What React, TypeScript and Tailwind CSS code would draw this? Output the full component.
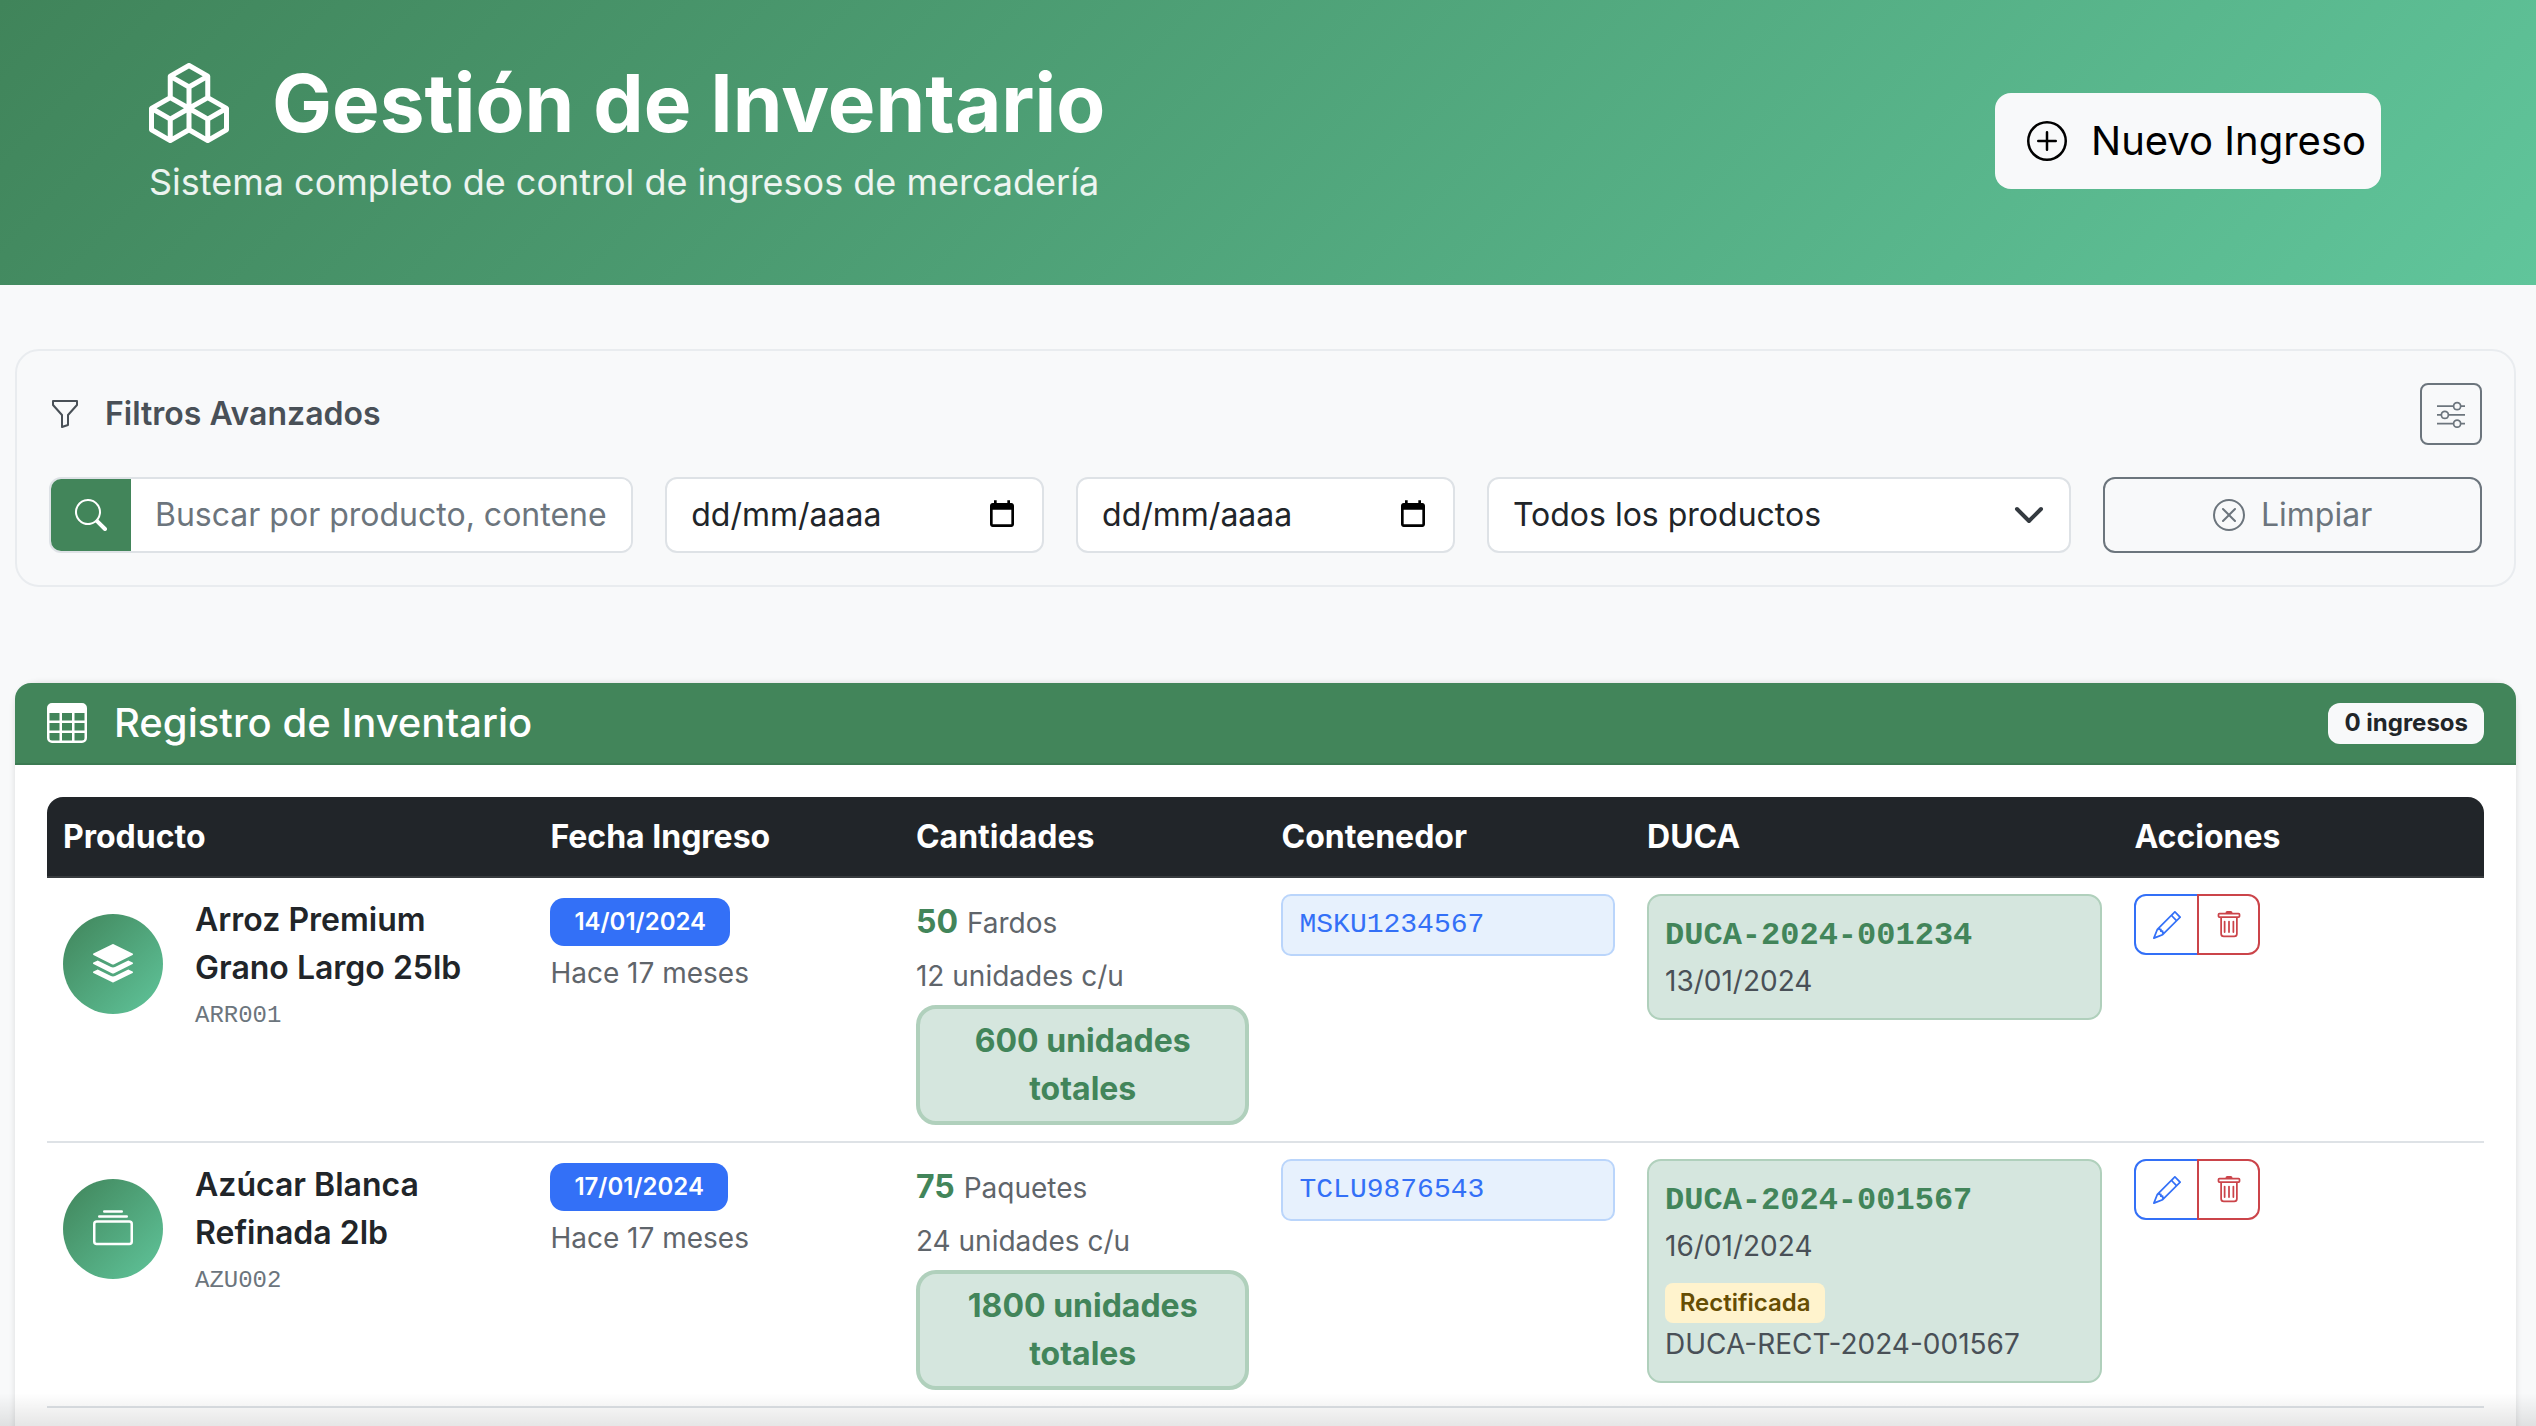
import {
  BsBoxes,
  BsCollection,
  BsFunnel,
  BsPencil,
  BsPlusCircle,
  BsSearch,
  BsSliders,
  BsStack,
  BsTable,
  BsTrash,
  BsXCircle,
} from "react-icons/bs";
import type { ReactNode } from "react";

function CalendarGlyph() {
  return (
    <svg viewBox="0 0 24 24" className="w-[32px] h-[32px] shrink-0" fill="#000">
      <path d="M19 3h-1V1h-2v2H8V1H6v2H5c-1.1 0-2 .9-2 2v14c0 1.1.9 2 2 2h14c1.1 0 2-.9 2-2V5c0-1.1-.9-2-2-2zm0 16H5V8h14v11z" />
    </svg>
  );
}

function DateField() {
  return (
    <div className="col-span-2 h-[76px] bg-white border-2 border-[#dee2e6] rounded-[12px] pl-[24px] pr-[24px] flex items-center justify-between text-[32px] text-[#212529]">
      <span>dd/mm/aaaa</span>
      <CalendarGlyph />
    </div>
  );
}

type Row = {
  icon: ReactNode;
  name: string[];
  code: string;
  date: string;
  qty: string;
  unit: string;
  perUnit: string;
  total: string[];
  container: string;
  duca: string;
  ducaDate: string;
  rect?: string;
};

const rows: Row[] = [
  {
    icon: <BsStack className="text-[40px]" />,
    name: ["Arroz Premium", "Grano Largo 25lb"],
    code: "ARR001",
    date: "14/01/2024",
    qty: "50",
    unit: "Fardos",
    perUnit: "12 unidades c/u",
    total: ["600 unidades", "totales"],
    container: "MSKU1234567",
    duca: "DUCA-2024-001234",
    ducaDate: "13/01/2024",
  },
  {
    icon: <BsCollection className="text-[40px]" />,
    name: ["Azúcar Blanca", "Refinada 2lb"],
    code: "AZU002",
    date: "17/01/2024",
    qty: "75",
    unit: "Paquetes",
    perUnit: "24 unidades c/u",
    total: ["1800 unidades", "totales"],
    container: "TCLU9876543",
    duca: "DUCA-2024-001567",
    ducaDate: "16/01/2024",
    rect: "DUCA-RECT-2024-001567",
  },
];

const mono = "font-['Liberation_Mono',monospace]";

export default function App() {
  return (
    <div className="h-[1426px] overflow-hidden bg-[#f8f9fa] relative font-['Inter',sans-serif] text-[32px] text-[#212529]">
      {/* header */}
      <header className="h-[285px] bg-[linear-gradient(135deg,#40845a,#60c59b)] pl-[149px] pr-[155px] flex items-center justify-between">
        <div className="text-white -mt-[22px]">
          <div className="flex items-center gap-[43px]">
            <BsBoxes className="text-[80px] shrink-0" />
            <h1 className="text-[80px] leading-[96px] font-bold">Gestión de Inventario</h1>
          </div>
          <p className="text-[36px] leading-[54px] mt-[4px] text-white/90">
            Sistema completo de control de ingresos de mercadería
          </p>
        </div>
        <button className="h-[96px] w-[386px] bg-[#f8f9fa] rounded-[16px] flex items-center gap-[24px] pl-[32px] text-[40px] text-black mt-[-4px]">
          <BsPlusCircle className="text-[40px]" />
          Nuevo Ingreso
        </button>
      </header>

      <main className="pl-[15px] pr-[20px] pt-[64px]">
        {/* filtros */}
        <section className="border-2 border-[#e9ecef] rounded-[24px] p-[32px]">
          <div className="flex items-center justify-between mb-[32px]">
            <div className="flex items-center gap-[24px] text-[#495057]">
              <BsFunnel className="text-[32px]" />
              <h2 className="text-[32px] font-semibold">Filtros Avanzados</h2>
            </div>
            <button className="w-[62px] h-[62px] border-2 border-[#6c757d] rounded-[8px] flex items-center justify-center text-[#6c757d]">
              <BsSliders className="text-[28px]" />
            </button>
          </div>
          <div className="grid grid-cols-12 gap-[32px]">
            <div className="col-span-3 h-[76px] bg-white border-2 border-[#dee2e6] rounded-[12px] flex overflow-hidden">
              <div className="w-[80px] bg-[#42855a] flex items-center justify-center text-white shrink-0">
                <BsSearch className="text-[32px]" />
              </div>
              <input
                className="flex-1 min-w-0 pl-[24px] pr-[24px] text-[32px] outline-none bg-white placeholder:text-[#6c757d]"
                placeholder="Buscar por producto, contenedor o DUCA"
              />
            </div>
            <DateField />
            <DateField />
            <div className="col-span-3 h-[76px] bg-white border-2 border-[#dee2e6] rounded-[12px] pl-[24px] pr-[24px] flex items-center justify-between">
              <span>Todos los productos</span>
              <svg viewBox="0 0 16 16" className="w-[32px] h-[32px]" fill="none" stroke="#343a40" strokeWidth="2" strokeLinecap="round" strokeLinejoin="round">
                <path d="m2 5 6 6 6-6" />
              </svg>
            </div>
            <button className="col-span-2 h-[76px] border-2 border-[#6c757d] rounded-[12px] flex items-center justify-center gap-[16px] text-[#6c757d]">
              <BsXCircle className="text-[32px]" />
              Limpiar
            </button>
          </div>
        </section>

        {/* registro */}
        <section className="mt-[96px] bg-white rounded-t-[24px] shadow-[0_0_6px_rgba(0,0,0,0.12)]">
          <div className="h-[82px] bg-[#42855a] border-b-2 border-[#3b7a52] rounded-t-[16px] pl-[32px] pr-[32px] flex items-center justify-between text-white">
            <div className="flex items-center gap-[27px]">
              <BsTable className="text-[40px]" />
              <h2 className="text-[40px] font-medium">Registro de Inventario</h2>
            </div>
            <span className="h-[41px] px-[16px] rounded-[12px] bg-[#f8f9fa] text-[#212529] text-[24px] font-bold flex items-center">
              0 ingresos
            </span>
          </div>
          <div className="p-[32px]">
            <table className="w-full table-fixed border-separate border-spacing-0">
              <thead>
                <tr className="text-white text-left text-[32px]">
                  <th className="w-[20%] h-[81px] bg-[#212529] border-b-2 border-[#373b3e] rounded-tl-[16px] px-[16px] font-bold">Producto</th>
                  <th className="w-[15%] bg-[#212529] border-b-2 border-[#373b3e] px-[16px] font-bold">Fecha Ingreso</th>
                  <th className="w-[15%] bg-[#212529] border-b-2 border-[#373b3e] px-[16px] font-bold">Cantidades</th>
                  <th className="w-[15%] bg-[#212529] border-b-2 border-[#373b3e] px-[16px] font-bold">Contenedor</th>
                  <th className="w-[20%] bg-[#212529] border-b-2 border-[#373b3e] px-[16px] font-bold">DUCA</th>
                  <th className="w-[15%] bg-[#212529] border-b-2 border-[#373b3e] rounded-tr-[16px] px-[16px] font-bold">Acciones</th>
                </tr>
              </thead>
              <tbody>
                {rows.map((r) => (
                  <tr key={r.code} className="align-top">
                    <td className="border-b-2 border-[#dee2e6] p-[16px]">
                      <div className="flex items-center gap-[32px]">
                        <div className="w-[100px] h-[100px] rounded-full bg-[linear-gradient(135deg,#40845a,#60c59b)] text-white flex items-center justify-center shrink-0">
                          {r.icon}
                        </div>
                        <div className="pt-[2px]">
                          <div className="font-semibold leading-[48px]">{r.name[0]}</div>
                          <div className="font-semibold leading-[48px]">{r.name[1]}</div>
                          <div className={`${mono} text-[24px] leading-[36px] mt-[6px] text-[#6c757d]`}>{r.code}</div>
                        </div>
                      </div>
                    </td>
                    <td className="border-b-2 border-[#dee2e6] p-[16px]">
                      <span className="inline-flex h-[48px] items-center px-[24px] rounded-[14px] bg-[#3370f7] text-white text-[24px] font-semibold mt-[4px]">
                        {r.date}
                      </span>
                      <div className="text-[28px] leading-[42px] mt-[6px] text-[#5f656b]">Hace 17 meses</div>
                    </td>
                    <td className="border-b-2 border-[#dee2e6] p-[16px]">
                      <div className="leading-[48px] pt-[4px]">
                        <span className="font-bold text-[#42855a]">{r.qty}</span>{" "}
                        <span className="text-[28px] text-[#5f656b]">{r.unit}</span>
                      </div>
                      <div className="text-[28px] leading-[42px] mt-[8px] text-[#5f656b]">{r.perUnit}</div>
                      <div className="mt-[8px] border-4 border-[#b0d0bc] bg-[#d5e6de] rounded-[20px] py-[8px] text-center font-bold leading-[48px] text-[#42855a]">
                        <div>{r.total[0]}</div>
                        <div>{r.total[1]}</div>
                      </div>
                    </td>
                    <td className="border-b-2 border-[#dee2e6] p-[16px]">
                      <div className={`${mono} border-2 border-[#bad5fb] bg-[#e7f1fd] rounded-[10px] px-[16px] py-[8px] text-[28px] leading-[42px] text-[#3370f7]`}>
                        {r.container}
                      </div>
                    </td>
                    <td className="border-b-2 border-[#dee2e6] p-[16px]">
                      <div className="border-2 border-[#b0d0bc] bg-[#d5e6de] rounded-[14px] p-[16px] text-[28px] leading-[42px] text-[#495057]">
                        <div className={`${mono} text-[32px] leading-[48px] font-bold text-[#42855a]`}>{r.duca}</div>
                        <div>{r.ducaDate}</div>
                        {r.rect && (
                          <>
                            <span className="mt-[16px] flex w-[160px] h-[40px] items-center justify-center rounded-[8px] bg-[#fff3cd] text-[#664d03] text-[24px] font-semibold">
                              Rectificada
                            </span>
                            <div>{r.rect}</div>
                          </>
                        )}
                      </div>
                    </td>
                    <td className="border-b-2 border-[#dee2e6] p-[16px]">
                      <div className="flex">
                        <button className="w-[65px] h-[61px] border-2 border-[#3370f7] rounded-l-[12px] flex items-center justify-center text-[#3370f7]">
                          <BsPencil className="text-[28px]" />
                        </button>
                        <button className="w-[63px] -ml-[2px] h-[61px] border-2 border-[#cb444a] rounded-r-[12px] flex items-center justify-center text-[#cb444a]">
                          <BsTrash className="text-[28px]" />
                        </button>
                      </div>
                    </td>
                  </tr>
                ))}
              </tbody>
            </table>
          </div>
        </section>
      </main>

      {/* scroll fade at the bottom of the viewport */}
      <div className="absolute left-0 right-0 bottom-0 h-[33px] pointer-events-none bg-gradient-to-b from-transparent to-black/10" />
    </div>
  );
}
